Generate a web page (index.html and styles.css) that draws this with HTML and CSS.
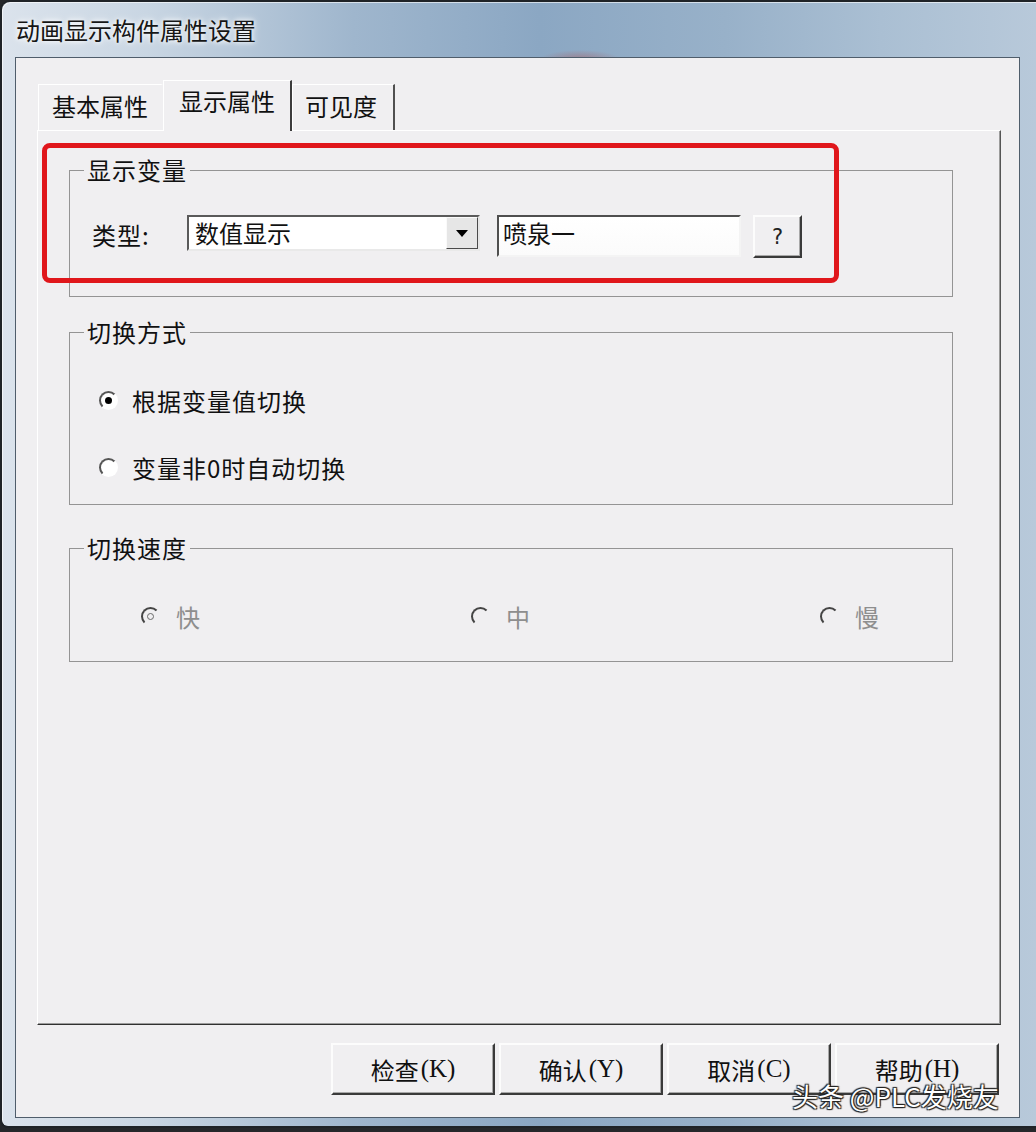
FILE: index.html
```html
<!DOCTYPE html>
<html lang="zh-CN">
<head>
  <meta charset="UTF-8">
  <title>动画显示构件属性设置</title>
  <link rel="stylesheet" href="styles.css">
</head>
<body>
  <div class="window">
    <div class="titlebar">动画显示构件属性设置</div>

    <div class="client">
      <div class="tabs">
        <div class="tab">基本属性</div>
        <div class="tab active">显示属性</div>
        <div class="tab">可见度</div>
      </div>

      <div class="panel">
        <fieldset class="group">
          <legend>显示变量</legend>
          <div class="var-row">
            <span class="field-label">类型:</span>
            <div class="combo">
              <span class="combo-text">数值显示</span>
              <span class="combo-btn"><span class="arrow"></span></span>
            </div>
            <div class="textbox">喷泉一</div>
            <div class="btn btn-small">?</div>
          </div>
        </fieldset>

        <fieldset class="group">
          <legend>切换方式</legend>
          <div class="radio-list">
            <div class="radio checked"><span class="radio-dot"></span>根据变量值切换</div>
            <div class="radio"><span class="radio-dot"></span>变量非0时自动切换</div>
          </div>
        </fieldset>

        <fieldset class="group disabled">
          <legend>切换速度</legend>
          <div class="speed-row">
            <div class="radio checked"><span class="radio-dot"></span>快</div>
            <div class="radio"><span class="radio-dot"></span>中</div>
            <div class="radio"><span class="radio-dot"></span>慢</div>
          </div>
        </fieldset>

        <!-- red annotation frame -->
        <div class="highlight"></div>
      </div>

      <div class="buttons">
        <div class="btn">检查<span class="key">(K)</span></div>
        <div class="btn">确认<span class="key">(Y)</span></div>
        <div class="btn">取消<span class="key">(C)</span></div>
        <div class="btn">帮助<span class="key">(H)</span></div>
      </div>
    </div>

    <div class="watermark">头条 @PLC发烧友</div>
  </div>
</body>
</html>
```

FILE: styles.css
```css
body {
  margin: 0;
  width: 1036px;
  height: 1132px;
  overflow: hidden;
  background-color: #25272a;
  font-family: "Noto Sans CJK SC", "Noto Sans", sans-serif;
  color: #111;
}
.window {
  position: relative;
  box-sizing: border-box;
  width: 1036px;
  height: 1128px;
  border: 2px solid #1f2327;
  border-right: none;
  border-radius: 10px 0 0 8px;
  display: flex;
  flex-direction: column;
  background:
    radial-gradient(ellipse 40px 9px at 578px 57px, rgba(170, 80, 80, 0.45), transparent),
    linear-gradient(90deg, #dbe3ec 0%, #c9d6e3 14%, #9fb6cd 34%, #8ba7c3 52%, #98b1c9 70%, #aabfd3 85%, #b8c9da 100%);
  box-shadow: inset 1px 1px 0 rgba(255, 255, 255, 0.6);
}
.titlebar {
  height: 55px;
  flex: none;
  padding-left: 14px;
  display: flex;
  align-items: center;
  font-size: 24px;
  color: #161616;
  text-shadow: 0 0 8px #fff, 0 0 4px #fff;
}
.client {
  flex: 1;
  display: flex;
  flex-direction: column;
  margin: 0 16px 8px 13px;
  padding: 22px 18px 22px 21px;
  border: 1px solid #4f5d6b;
  background-color: #f0eff1;
}

/* tabs */
.tabs {
  display: flex;
  align-items: flex-end;
  height: 50px;
  margin-left: 1px;
  flex: none;
}
.tab {
  box-sizing: border-box;
  height: 46px;
  padding: 6px 13px 0;
  border: 1px solid #fff;
  border-bottom: none;
  border-right: 2px solid #505050;
  font-size: 24px;
  line-height: 30px;
  color: #111;
}
.tab:has(+ .active) {
  border-right-color: transparent;
}
.tab.active {
  position: relative;
  z-index: 1;
  height: 51px;
  margin-bottom: -1px;
  padding: 5px 15px 0;
  background-color: #f0eff1;
  border-right-color: #3c3c3c;
}
.tab:last-child {
  padding: 6px 16px 0 12px;
}

.panel {
  position: relative;
  flex: 1;
  border: 1px solid;
  border-color: #fff #555 #303030 #fff;
  box-shadow: inset -1px -1px 0 #9c9c9c;
}

/* group boxes */
.group {
  margin: 0 47px 0 31px;
  padding: 0;
  min-width: 0;
  border: 1px solid #949494;
}
.group:nth-of-type(1) { margin-top: 24px; }
.group:nth-of-type(2) { margin-top: 20px; }
.group:nth-of-type(3) { margin-top: 28px; }
.group legend {
  margin-left: 14px;
  padding: 0 3px;
  font-size: 24px;
  line-height: 30px;
  letter-spacing: 1px;
  color: #111;
}

.var-row {
  display: flex;
  align-items: flex-start;
  padding: 30px 0 38px 22px;
}
.field-label {
  width: 95px;
  font-size: 24px;
  line-height: 40px;
  letter-spacing: 1px;
}
.combo {
  box-sizing: border-box;
  display: flex;
  width: 293px;
  height: 36px;
  margin-right: 17px;
  border: 2px solid;
  border-color: #5a5a5a #e6e6e6 #e9e9e9 #5a5a5a;
  background-color: #fff;
}
.combo-text {
  flex: 1;
  padding-left: 6px;
  font-size: 24px;
  line-height: 31px;
}
.combo-btn {
  box-sizing: border-box;
  width: 32px;
  display: flex;
  align-items: center;
  justify-content: center;
  background-color: #e6e6e6;
  border: 1px solid;
  border-color: #fafafa #4a4a4a #4a4a4a #fafafa;
}
.arrow {
  width: 0;
  height: 0;
  border-left: 6px solid transparent;
  border-right: 6px solid transparent;
  border-top: 7px solid #000;
}
.textbox {
  box-sizing: border-box;
  width: 244px;
  height: 42px;
  margin-right: 12px;
  padding-left: 4px;
  border: 2px solid;
  border-color: #4f4f4f #f4f4f4 #f4f4f4 #4f4f4f;
  background: linear-gradient(#fff, #fbfbfb);
  font-size: 24px;
  line-height: 32px;
}

/* buttons */
.btn {
  box-sizing: border-box;
  width: 164px;
  height: 52px;
  display: flex;
  align-items: center;
  justify-content: center;
  border: 2px solid;
  border-color: #fcfcfc #3a3a3a #3a3a3a #fcfcfc;
  box-shadow: inset -1px -1px 0 #a8a8a8;
  background-color: #f0eff1;
  font-size: 24px;
  color: #111;
}
.btn .key {
  margin-left: 2px;
  font-family: "Liberation Serif", serif;
  font-size: 25px;
}
.btn-small {
  width: 49px;
  height: 43px;
  font-family: "DejaVu Sans", sans-serif;
  font-size: 21px;
  color: #222;
}
.buttons {
  flex: none;
  display: flex;
  justify-content: flex-end;
  gap: 4px;
  margin-top: 18px;
  margin-right: 2px;
}

/* radios */
.radio {
  display: flex;
  align-items: center;
  gap: 14px;
  height: 30px;
  font-size: 24px;
  letter-spacing: 1px;
  color: #111;
}
.radio-dot {
  position: relative;
  flex: none;
  box-sizing: border-box;
  width: 19px;
  height: 19px;
  border-radius: 50%;
  border: 2px solid;
  border-color: #555 #fff #fff #555;
  background-color: #fff;
}
.radio.checked .radio-dot::after {
  content: "";
  position: absolute;
  left: 4px;
  top: 4px;
  width: 7px;
  height: 7px;
  border-radius: 50%;
  background-color: #000;
}
.radio-list {
  display: flex;
  flex-direction: column;
  gap: 37px;
  padding: 38px 0 22px 29px;
}
.speed-row {
  display: grid;
  grid-template-columns: 330px 349px auto;
  padding: 38px 0 30px 71px;
}
.disabled .radio {
  gap: 16px;
  color: #8e8e8e;
}
.disabled .radio-dot {
  background-color: transparent;
  border-color: #444 transparent transparent #444;
}
.disabled .radio.checked .radio-dot::after {
  left: 4px;
  top: 4px;
  width: 5px;
  height: 5px;
  background-color: transparent;
  border: 1px solid #6a6a6a;
}

.highlight {
  position: absolute;
  left: 4px;
  top: 12px;
  width: 797px;
  height: 140px;
  box-sizing: border-box;
  border: 5px solid #e0161b;
  border-radius: 8px;
}
.watermark {
  position: absolute;
  left: 790px;
  top: 1081px;
  font-size: 26px;
  line-height: 26px;
  color: #fff;
  text-shadow: 1px 1px 1px #222, -1px -1px 1px #222, 1px -1px 1px #222, -1px 1px 1px #222;
}
```
